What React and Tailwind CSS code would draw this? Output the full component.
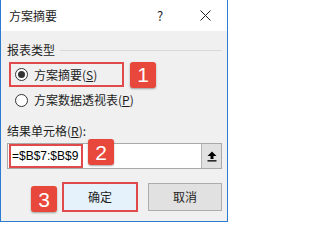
import React from 'react';

const font = { fontFamily: '"Noto Sans CJK SC", "Noto Sans", sans-serif' };

const Badge = ({ n, className = '' }) => (
  <div
    className={`w-[26px] h-[26px] rounded-[3px] bg-[#e8483b] shadow-[0_1px_2px_rgba(0,0,0,0.35)] flex items-center justify-center text-white text-[21px] leading-none font-['Liberation_Sans',sans-serif] ${className}`}
  >
    {n}
  </div>
);

const Radio = ({ checked }) => (
  <span className="w-[13px] h-[13px] rounded-full border border-[#333] bg-white flex items-center justify-center shrink-0">
    {checked && <span className="w-[7px] h-[7px] rounded-full bg-[#333]" />}
  </span>
);

export default function App() {
  return (
    <div className="w-[230px] h-[224px] bg-white" style={font}>
      <div className="w-[228px] h-[222px] border-l border-r border-b border-[#2b7bd3] flex flex-col text-[12px] text-[#1e1e1e]">
        {/* title bar */}
        <div className="h-[31px] bg-white flex items-center pl-[8px] shrink-0">
          <span className="text-[12px]">方案摘要</span>
          <span className="ml-auto text-[13px] w-[10px] text-center">?</span>
          <svg className="ml-[35px] mr-[16px]" width="11" height="11" viewBox="0 0 11 11">
            <path d="M0.5 0.5 L10.5 10.5 M10.5 0.5 L0.5 10.5" stroke="#222" strokeWidth="1" />
          </svg>
        </div>

        {/* body */}
        <div className="flex-1 bg-[#f0f0f0] pl-[6px] pr-[5px] flex flex-col">
          <div className="mt-[12px] h-[14px] flex items-center">
            <span>报表类型</span>
            <div className="flex-1 h-px bg-[#d9d9d9] ml-[5px]" />
          </div>

          <div className="mt-[5px] h-[25px] flex items-center">
            <div className="ml-[2px] w-[115px] h-[25px] border-2 border-[#e04a4a] flex items-center pl-[4px]">
              <Radio checked />
              <span className="ml-[6px]">
                方案摘要(<span className="underline">S</span>)
              </span>
            </div>
            <Badge n="1" className="ml-[6px]" />
          </div>

          <div className="mt-[2px] h-[22px] flex items-center pl-[8px]">
            <Radio />
            <span className="ml-[6px]">
              方案数据透视表(<span className="underline">P</span>)
            </span>
          </div>

          <div className="mt-[13px] h-[14px] flex items-center">
            结果单元格(<span className="underline">R</span>):
          </div>

          <div className="relative mt-[5px] h-[26px] bg-white border border-[#a9a9a9] flex items-stretch">
            <div className="ml-px h-[24px] w-[74px] border-2 border-[#e04a4a] flex items-center pl-[1px] font-['Liberation_Sans',sans-serif] text-[12px] text-black whitespace-nowrap">
              =$B$7:$B$9
            </div>
            <Badge n="2" className="absolute left-[80px] top-[-5px]" />
            <div className="ml-auto w-[20px] bg-[#e1e1e1] border-l border-[#b5b5b5] flex items-center justify-center">
              <svg width="10" height="11" viewBox="0 0 10 11">
                <path d="M5 0.5 L9.5 5 H6.5 V8 H3.5 V5 H0.5 Z" fill="#000" />
                <rect x="0.5" y="9.2" width="9" height="1.3" fill="#000" />
              </svg>
            </div>
          </div>

          <div className="mt-[13px] h-[30px] flex items-center justify-end">
            <Badge n="3" className="self-end" />
            <div className="ml-[5px] w-[76px] h-[30px] border-2 border-[#e04a4a] bg-[#e5f1fb] flex items-center justify-center">
              确定
            </div>
            <div className="ml-[10px] w-[74px] h-[28px] border border-[#adadad] bg-[#e1e1e1] flex items-center justify-center">
              取消
            </div>
          </div>
        </div>
      </div>
    </div>
  );
}
